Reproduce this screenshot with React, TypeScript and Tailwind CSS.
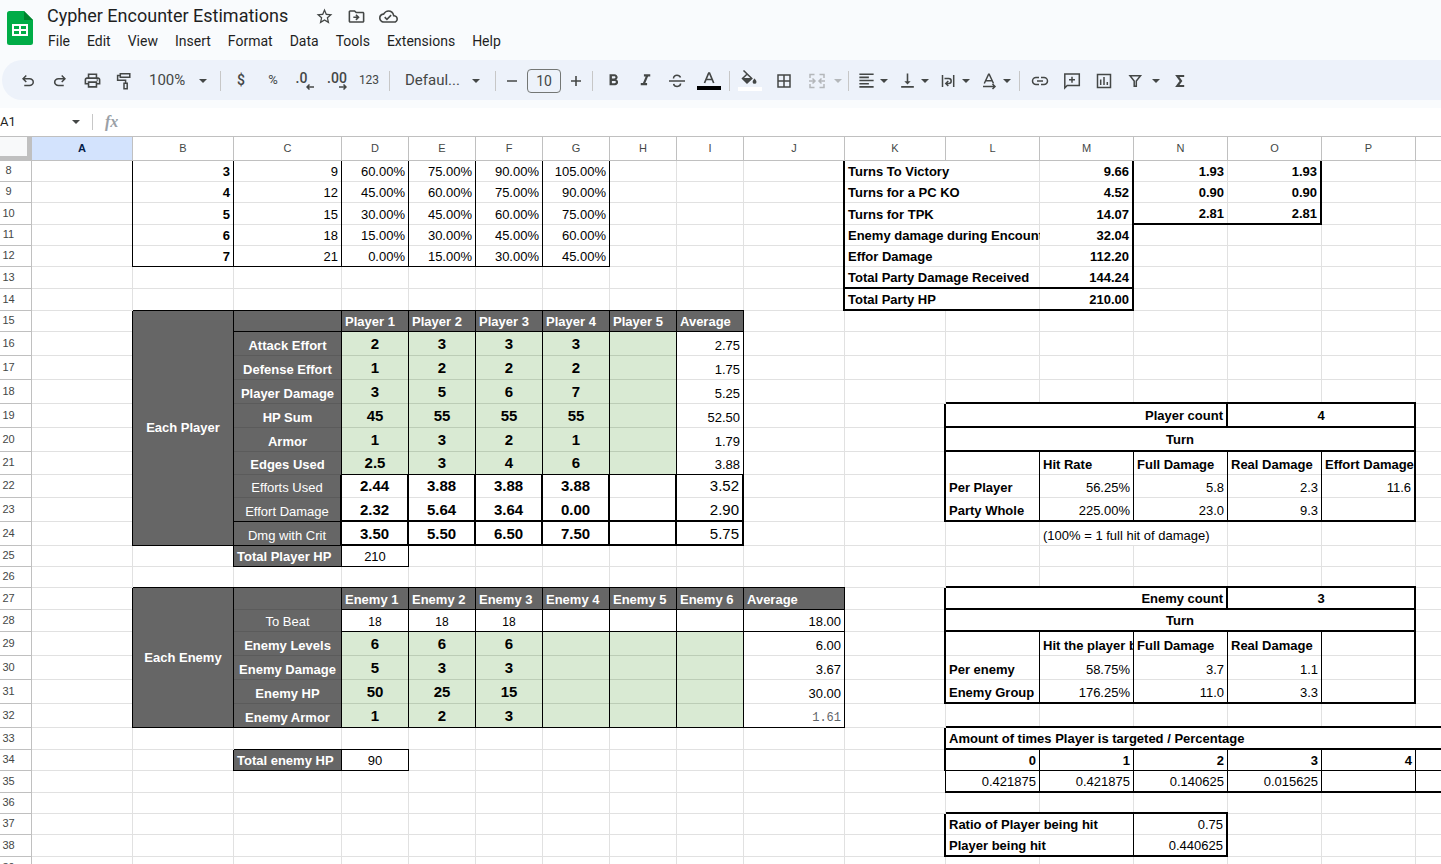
import { useState } from "react";
import type { CSSProperties, ReactNode } from "react";
import clsx from "clsx";
import {
  MdBorderAll,
  MdFormatAlignLeft,
  MdFormatBold,
  MdFormatItalic,
  MdOutlineCloudDone,
  MdOutlineDriveFileMove,
  MdOutlinePrint,
  MdStarBorder,
  MdVerticalAlignBottom,
} from "react-icons/md";

type Cell = {
  v?: string;
  bold?: boolean;
  size?: "sm" | "lg";
  align?: "left" | "center" | "right";
  middle?: boolean;
  fill?: "dark" | "green";
  mono?: boolean;
  cols?: number;
  rows?: number;
};

const COLS = "ABCDEFGHIJKLMNOPQ".split("");
const COL_WIDTHS = [101, 101, 108, 67, 67, 67, 67, 67, 67, 101, 101, 94, 94, 94, 94, 94, 94];

const FIRST_ROW = 8;
const ROW_HEIGHTS = [
  21, 21, 22, 21, 21, 22, 22, 21, 24, 24, 24, 24, 24, 23, 23, 24, 24, 21, 21, 22, 22, 24, 24, 24, 24, 22, 21, 22, 21,
  21, 22, 22,
];

// columns, first row, last row, weight of the line on the right side
const VERTICAL: [string, number, number, number][] = [
  ["AB", 8, 12, 1],
  ["AB", 15, 24, 1],
  ["AB", 27, 32, 1],
  ["BC", 25, 25, 1],
  ["BCD", 34, 34, 1],
  ["CDEFG", 8, 12, 1],
  ["CDEFGHI", 15, 21, 1],
  ["CDEFGHI", 22, 24, 2],
  ["D", 25, 25, 1],
  ["CDEFGHIJ", 27, 32, 1],
  ["JM", 8, 14, 2],
  ["O", 8, 10, 2],
  ["KP", 19, 23, 2],
  ["KP", 27, 31, 2],
  ["LMNO", 21, 23, 1],
  ["LMNO", 29, 31, 1],
  ["N", 19, 19, 2],
  ["N", 27, 27, 2],
  ["K", 33, 34, 2],
  ["K", 35, 35, 1],
  ["LMNOP", 34, 35, 1],
  ["KN", 37, 38, 2],
  ["M", 37, 38, 1],
];

// row, columns, weight of the line under it
const HORIZONTAL: [number, string, number][] = [
  [10, "NO", 2],
  [12, "BCDEFG", 1],
  [13, "KLM", 2],
  [14, "BCDEFGHI", 1],
  [14, "KLM", 2],
  [15, "CDEFGHI", 1],
  [18, "LMNOP", 2],
  [19, "LMNOP", 2],
  [20, "LMNOP", 2],
  [21, "DEFGHI", 1],
  [23, "C", 1],
  [23, "DEFGHI", 2],
  [23, "LMNOP", 2],
  [24, "BC", 1],
  [24, "DEFGHI", 2],
  [25, "CD", 1],
  [26, "BCDEFGHIJ", 1],
  [26, "LMNOP", 2],
  [27, "DEFGHIJ", 1],
  [27, "LMNOP", 2],
  [28, "DEFGHIJ", 1],
  [28, "LMNOP", 2],
  [31, "LMNOP", 2],
  [32, "BCDEFGHIJ", 1],
  [32, "LMNOPQ", 2],
  [33, "CD", 1],
  [33, "LMNOPQ", 2],
  [34, "CD", 1],
  [34, "LMNOPQ", 1],
  [35, "LMNOPQ", 2],
  [36, "LMN", 2],
  [38, "LMN", 2],
];

const cells: Record<string, Cell> = {};

function fillRow(row: number, start: string, values: string[], opts: Cell = {}) {
  const at = COLS.indexOf(start);
  values.forEach((v, i) => {
    cells[COLS[at + i] + row] = { v, ...opts };
  });
}

// hit chances by level
const chances = [
  ["3", "9", "60.00%", "75.00%", "90.00%", "105.00%"],
  ["4", "12", "45.00%", "60.00%", "75.00%", "90.00%"],
  ["5", "15", "30.00%", "45.00%", "60.00%", "75.00%"],
  ["6", "18", "15.00%", "30.00%", "45.00%", "60.00%"],
  ["7", "21", "0.00%", "15.00%", "30.00%", "45.00%"],
];
chances.forEach(([level, ...rest], i) => {
  fillRow(8 + i, "B", [level], { align: "right", bold: true });
  fillRow(8 + i, "C", rest, { align: "right" });
});

// encounter summary
const summary = [
  ["Turns To Victory", "9.66", "1.93", "1.93"],
  ["Turns for a PC KO", "4.52", "0.90", "0.90"],
  ["Turns for TPK", "14.07", "2.81", "2.81"],
  ["Enemy damage during Encounter", "32.04"],
  ["Effor Damage", "112.20"],
  ["Total Party Damage Received", "144.24"],
  ["Total Party HP", "210.00"],
];
summary.forEach(([label, ...rest], i) => {
  cells["K" + (8 + i)] = { v: label, bold: true, cols: 2 };
  fillRow(8 + i, "M", rest, { align: "right", bold: true });
});

// players
cells.B15 = { v: "Each Player", bold: true, fill: "dark", align: "center", middle: true, rows: 10 };
cells.C15 = { fill: "dark" };
fillRow(15, "D", ["Player 1", "Player 2", "Player 3", "Player 4", "Player 5", "Average"], { bold: true, fill: "dark" });
const players = [
  ["Attack Effort", "2", "3", "3", "3", "", "2.75"],
  ["Defense Effort", "1", "2", "2", "2", "", "1.75"],
  ["Player Damage", "3", "5", "6", "7", "", "5.25"],
  ["HP Sum", "45", "55", "55", "55", "", "52.50"],
  ["Armor", "1", "3", "2", "1", "", "1.79"],
  ["Edges Used", "2.5", "3", "4", "6", "", "3.88"],
  ["Efforts Used", "2.44", "3.88", "3.88", "3.88", "", "3.52"],
  ["Effort Damage", "2.32", "5.64", "3.64", "0.00", "", "2.90"],
  ["Dmg with Crit", "3.50", "5.50", "6.50", "7.50", "", "5.75"],
];
players.forEach((p, i) => {
  const row = 16 + i;
  const input = i < 6;
  cells["C" + row] = { v: p[0], bold: input, fill: "dark", align: "center" };
  fillRow(row, "D", p.slice(1, 6), {
    bold: true,
    size: "lg",
    align: "center",
    middle: true,
    fill: input ? "green" : undefined,
  });
  cells["I" + row] = { v: p[6], align: "right", size: input ? undefined : "lg", middle: !input };
});
cells.C25 = { v: "Total Player HP", bold: true, fill: "dark" };
cells.D25 = { v: "210", align: "center" };

// enemies
cells.B27 = { v: "Each Enemy", bold: true, fill: "dark", align: "center", middle: true, rows: 6 };
cells.C27 = { fill: "dark" };
fillRow(27, "D", ["Enemy 1", "Enemy 2", "Enemy 3", "Enemy 4", "Enemy 5", "Enemy 6", "Average"], {
  bold: true,
  fill: "dark",
});
cells.C28 = { v: "To Beat", fill: "dark", align: "center" };
fillRow(28, "D", ["18", "18", "18"], { size: "sm", align: "center" });
cells.J28 = { v: "18.00", align: "right" };
const enemies = [
  ["Enemy Levels", "6", "6", "6", "", "", "", "6.00"],
  ["Enemy Damage", "5", "3", "3", "", "", "", "3.67"],
  ["Enemy HP", "50", "25", "15", "", "", "", "30.00"],
  ["Enemy Armor", "1", "2", "3", "", "", "", "1.61"],
];
enemies.forEach((e, i) => {
  const row = 29 + i;
  cells["C" + row] = { v: e[0], bold: true, fill: "dark", align: "center" };
  fillRow(row, "D", e.slice(1, 7), { bold: true, size: "lg", align: "center", middle: true, fill: "green" });
  cells["J" + row] = { v: e[7], align: "right", mono: i === 3 };
});
cells.C34 = { v: "Total enemy HP", bold: true, fill: "dark" };
cells.D34 = { v: "90", align: "center" };

// per turn results
cells.L19 = { v: "Player count", bold: true, align: "right", middle: true, cols: 3 };
cells.O19 = { v: "4", bold: true, align: "center", middle: true, cols: 2 };
cells.L20 = { v: "Turn", bold: true, align: "center", middle: true, cols: 5 };
fillRow(21, "M", ["Hit Rate", "Full Damage", "Real Damage", "Effort Damage"], { bold: true });
cells.L22 = { v: "Per Player", bold: true };
fillRow(22, "M", ["56.25%", "5.8", "2.3", "11.6"], { align: "right" });
cells.L23 = { v: "Party Whole", bold: true };
fillRow(23, "M", ["225.00%", "23.0", "9.3"], { align: "right" });
cells.M24 = { v: "(100% = 1 full hit of damage)", cols: 2 };

cells.L27 = { v: "Enemy count", bold: true, align: "right", middle: true, cols: 3 };
cells.O27 = { v: "3", bold: true, align: "center", middle: true, cols: 2 };
cells.L28 = { v: "Turn", bold: true, align: "center", middle: true, cols: 5 };
fillRow(29, "M", ["Hit the player by", "Full Damage", "Real Damage"], { bold: true });
cells.L30 = { v: "Per enemy", bold: true };
fillRow(30, "M", ["58.75%", "3.7", "1.1"], { align: "right" });
cells.L31 = { v: "Enemy Group", bold: true };
fillRow(31, "M", ["176.25%", "11.0", "3.3"], { align: "right" });

cells.L33 = { v: "Amount of times Player is targeted / Percentage", bold: true, middle: true, cols: 6 };
fillRow(34, "L", ["0", "1", "2", "3", "4"], { bold: true, align: "right" });
fillRow(35, "L", ["0.421875", "0.421875", "0.140625", "0.015625"], { align: "right" });
cells.L37 = { v: "Ratio of Player being hit", bold: true, cols: 2 };
cells.N37 = { v: "0.75", align: "right" };
cells.L38 = { v: "Player being hit", bold: true, cols: 2 };
cells.N38 = { v: "0.440625", align: "right" };

// cells hidden under a merged neighbour
const covered = new Set<string>();
Object.entries(cells).forEach(([id, c]) => {
  const col = COLS.indexOf(id[0]);
  const row = Number(id.slice(1));
  for (let r = 0; r < (c.rows ?? 1); r++) {
    for (let k = 0; k < (c.cols ?? 1); k++) {
      if (r || k) covered.add(COLS[col + k] + (row + r));
    }
  }
});

function rightWeight(col: string, row: number) {
  return VERTICAL.find(([c, from, to]) => c.includes(col) && row >= from && row <= to)?.[3] ?? 0;
}

function bottomWeight(col: string, row: number) {
  return HORIZONTAL.find(([r, c]) => r === row && c.includes(col))?.[2] ?? 0;
}

function cellLines(right: number, bottom: number, fill?: Cell["fill"]): CSSProperties {
  const soft = fill === "dark" ? "#5b5b5b" : fill === "green" ? "#bccdb6" : "#e1e1e1";
  const r = `inset -${right || 1}px 0 ${right ? "#000" : soft}`;
  const b = `inset 0 -${bottom || 1}px ${bottom ? "#000" : soft}`;
  return { boxShadow: right ? `${r}, ${b}` : `${b}, ${r}` };
}

function SheetCell({ id, cell }: { id: string; cell: Cell }) {
  const lastCol = COLS[COLS.indexOf(id[0]) + (cell.cols ?? 1) - 1];
  const lastRow = Number(id.slice(1)) + (cell.rows ?? 1) - 1;
  const right = rightWeight(lastCol, lastRow);
  const bottom = bottomWeight(lastCol, lastRow);
  return (
    <td
      colSpan={cell.cols}
      rowSpan={cell.rows}
      style={cellLines(right, bottom, cell.fill)}
      className={clsx(
        "overflow-hidden whitespace-nowrap pt-0 pl-[3px] leading-4",
        right === 2 ? "pr-[5px]" : "pr-1",
        cell.middle ? "pb-px align-middle" : "align-bottom",
        !cell.middle && (bottom === 2 ? "pb-[3px]" : "pb-0.5"),
        cell.bold && "font-bold",
        cell.mono && "font-['Liberation_Mono',monospace] text-xs text-[#5f6368]",
        !cell.mono && (cell.size === "lg" ? "text-[15px]" : cell.size === "sm" ? "text-xs" : "text-[13px]"),
        cell.align === "right" && "text-right",
        cell.align === "center" && "text-center",
        cell.fill === "dark" && "bg-[#666666] text-white",
        cell.fill === "green" && "bg-[#d9ead3]",
      )}
    >
      {cell.v}
    </td>
  );
}

function Sheet() {
  return (
    <div className="flex-1 overflow-hidden border-t border-[#c0c0c0] bg-white">
      <table className="w-[1510px] table-fixed border-separate border-spacing-0 font-['Liberation_Sans',sans-serif] text-black">
        <colgroup>
          <col className="w-8" />
          {COL_WIDTHS.map((w, i) => (
            <col key={i} style={{ width: w }} />
          ))}
        </colgroup>
        <thead>
          <tr className="h-6">
            <th aria-label="Select all" className="border-r-[5px] border-b-[5px] border-[#c0c0c0] bg-[#f8f9fa]" />
            {COLS.map((c) => (
              <th
                key={c}
                scope="col"
                className={clsx(
                  "border-r border-b border-[#c0c0c0] px-0 pt-0 pb-0.5 text-center text-[11px] leading-4",
                  c === "A" ? "bg-[#d3e3fd] font-bold text-[#041e49]" : "font-normal text-[#444746]",
                )}
              >
                {c}
              </th>
            ))}
          </tr>
        </thead>
        <tbody>
          {ROW_HEIGHTS.map((height, i) => {
            const row = FIRST_ROW + i;
            return (
              <tr key={row} style={{ height }}>
                <th
                  scope="row"
                  className="border-r border-b border-[#c0c0c0] pt-0 pr-[14px] pb-0.5 pl-0 text-center align-middle text-[11px] leading-4 font-normal text-[#444746]"
                >
                  {row}
                </th>
                {COLS.filter((c) => !covered.has(c + row)).map((c) => (
                  <SheetCell key={c} id={c + row} cell={cells[c + row] ?? {}} />
                ))}
              </tr>
            );
          })}
        </tbody>
      </table>
    </div>
  );
}

function SheetsLogo() {
  return (
    <svg width="26" height="34" viewBox="0 0 26 34" aria-hidden="true">
      <path d="M2.500 0H17l9 9v22.500a2.500 2.500 0 0 1-2.500 2.500h-21A2.500 2.500 0 0 1 0 31.500v-29A2.500 2.500 0 0 1 2.500 0Z" fill="#00ac47" />
      <path d="M17 0l9 9h-9Z" fill="#00832d" />
      <path d="M5 13h16v12H5Zm2 2v3h5v-3Zm7 0v3h5v-3Zm-7 5v3h5v-3Zm7 0v3h5v-3Z" fill="#fff" fillRule="evenodd" />
    </svg>
  );
}

function Icon({ children, box = "0 0 18 18" }: { children: ReactNode; box?: string }) {
  return (
    <svg width="18" height="18" viewBox={box} fill="none" stroke="currentColor" strokeWidth="1.500" aria-hidden="true">
      {children}
    </svg>
  );
}

function Caret() {
  return (
    <span className="flex w-3 justify-center">
      <svg width="8" height="4" viewBox="0 0 8 4" fill="currentColor" aria-hidden="true">
        <path d="M0 0h8L4 4Z" />
      </svg>
    </span>
  );
}

function Tool({ label, className = "w-8", children }: { label: string; className?: string; children: ReactNode }) {
  return (
    <button type="button" aria-label={label} className={clsx("flex h-7 shrink-0 items-center justify-center rounded", className)}>
      {children}
    </button>
  );
}

function MenuTool({ label, className = "w-[41px]", children }: { label: string; className?: string; children: ReactNode }) {
  return (
    <button type="button" aria-label={label} className={clsx("flex h-7 shrink-0 items-center justify-end rounded", className)}>
      <span className="flex w-6 justify-center">{children}</span>
      <Caret />
    </button>
  );
}

function Divider() {
  return <span className="mx-1 h-5 w-px shrink-0 bg-[#c7c7c7]" />;
}

function Decimals({ text, increase }: { text: string; increase?: boolean }) {
  return (
    <span className="flex flex-col items-end">
      <span className={clsx("text-sm leading-3 font-medium", !increase && "pr-[7px]")}>{text}</span>
      <svg width="8" height="6" viewBox="0 0 8 6" fill="none" stroke="currentColor" strokeWidth="1.500" aria-hidden="true">
        {increase ? <path d="M0 3h7M4.500 .5 7 3 4.500 5.500" /> : <path d="M8 3H1M3.500 .5 1 3 3.500 5.500" />}
      </svg>
    </span>
  );
}

function Toolbar() {
  const [fontSize, setFontSize] = useState("10");
  const step = (by: number) => setFontSize(String(Number(fontSize) + by));
  return (
    <div className="ml-0.5 flex h-10 items-center overflow-hidden rounded-l-full bg-[#edf2fa] pt-px pl-[10px] text-[#444746]">
      <Tool label="Undo">
        <Icon box="0 -960 960 960">
          <path stroke="none" fill="currentColor" d="M280-200v-80h284q63 0 109.500-40T720-420q0-60-46.500-100T564-560H312l104 104-56 56-200-200 200-200 56 56-104 104h252q97 0 169.500 63T800-420q0 94-72.500 157T564-200H280Z" />
        </Icon>
      </Tool>
      <Tool label="Redo">
        <Icon box="0 -960 960 960">
          <path stroke="none" fill="currentColor" d="M396-200q-97 0-169.500-63T154-420q0-94 72.500-157T396-640h252L544-744l56-56 200 200-200 200-56-56 104-104H396q-63 0-109.500 40T240-420q0 60 46.500 100T396-280h284v80H396Z" />
        </Icon>
      </Tool>
      <Tool label="Print">
        <MdOutlinePrint size={19} />
      </Tool>
      <Tool label="Paint format">
        <Icon>
          <path d="M5.300 1.700h9.500v3.600H5.300ZM5.300 3.500H2.600v4.700h8v3" />
          <path d="M9 11.200h3.200v5.600H9Z" />
        </Icon>
      </Tool>
      <button type="button" className="flex h-7 w-[76px] shrink-0 items-center justify-between pr-[7px] pl-[9px] text-[15px]">
        100%
        <Caret />
      </button>
      <Divider />
      <Tool label="Format as currency">
        <span className="pb-0.5 text-sm font-medium">$</span>
      </Tool>
      <Tool label="Format as percent">
        <span className="pb-0.5 text-[13px]">%</span>
      </Tool>
      <Tool label="Decrease decimal places">
        <Decimals text=".0" />
      </Tool>
      <Tool label="Increase decimal places">
        <Decimals text=".00" increase />
      </Tool>
      <Tool label="More formats">
        <span className="pb-0.5 text-xs">123</span>
      </Tool>
      <Divider />
      <button type="button" className="flex h-7 w-[97px] shrink-0 items-center justify-between pr-[9px] pl-[11px] text-[15px]">
        Defaul...
        <Caret />
      </button>
      <Divider />
      <button type="button" aria-label="Decrease font size" onClick={() => step(-1)} className="flex h-6 w-6 shrink-0 items-center justify-center">
        <svg width="12" height="12" viewBox="0 0 12 12" stroke="currentColor" strokeWidth="1.600">
          <path d="M1 6h10" />
        </svg>
      </button>
      <input
        aria-label="Font size"
        value={fontSize}
        onChange={(e) => setFontSize(e.target.value)}
        className="mx-[3px] h-6 w-[34px] shrink-0 rounded border border-[#747775] bg-transparent text-center text-sm"
      />
      <button type="button" aria-label="Increase font size" onClick={() => step(1)} className="flex h-6 w-6 shrink-0 items-center justify-center">
        <svg width="12" height="12" viewBox="0 0 12 12" stroke="currentColor" strokeWidth="1.600">
          <path d="M1 6h10M6 1v10" />
        </svg>
      </button>
      <Divider />
      <Tool label="Bold">
        <MdFormatBold size={19} />
      </Tool>
      <Tool label="Italic">
        <MdFormatItalic size={19} />
      </Tool>
      <Tool label="Strikethrough">
        <Icon>
          <path d="M1 9h16M5.500 6.500C5.500 4.300 7 3.300 9 3.300c1.800 0 3 .9 3.500 2.300M5.600 11.800c.3 1.600 1.600 2.600 3.600 2.600s3.400-1 3.400-2.800" />
        </Icon>
      </Tool>
      <Tool label="Text color">
        <svg width="24" height="20" viewBox="0 0 24 20" aria-hidden="true">
          <path d="M7.500 12 11.700 2h.8l4.200 10M9 8.500h6.200" fill="none" stroke="currentColor" strokeWidth="1.700" />
          <path d="M0 15h24v4H0Z" fill="#000" />
        </svg>
      </Tool>
      <Divider />
      <Tool label="Fill color">
        <svg width="24" height="22" viewBox="0 0 24 22" aria-hidden="true">
          <path d="M5.500.5 13.800 8.500 9 13 4.500 8.500l4.700-4.500" fill="none" stroke="currentColor" strokeWidth="1.500" />
          <path d="M4.500 8h9.300L9 13ZM16.500 8.500s2 2.200 2 3.400a1.900 1.900 0 0 1-3.900 0c0-1.200 1.900-3.400 1.900-3.400Z" fill="currentColor" />
          <path d="M0 17h24v4H0Z" fill="#fff" />
        </svg>
      </Tool>
      <Tool label="Borders" className="w-9">
        <MdBorderAll size={18} />
      </Tool>
      <button type="button" aria-label="Merge cells" disabled className="flex h-7 w-[42px] shrink-0 items-center justify-end text-[#b4b7ba]">
        <span className="flex w-[30px] justify-center">
          <Icon>
            <path d="M6.500 2.500H2V6M2 12v3.500h4.500M11.500 2.500H16V6M16 12v3.500h-4.500M1 9h5M17 9h-5M4.500 6.500 7 9l-2.500 2.500M13.500 6.500 11 9l2.500 2.500" />
          </Icon>
        </span>
        <Caret />
      </button>
      <Divider />
      <MenuTool label="Horizontal align" className="w-[37px]">
        <MdFormatAlignLeft size={19} />
      </MenuTool>
      <MenuTool label="Vertical align">
        <MdVerticalAlignBottom size={19} />
      </MenuTool>
      <MenuTool label="Text wrapping">
        <Icon>
          <path d="M3.500 3v12M14.700 3v12M5.500 6.500h4.200a2.500 2.500 0 0 1 0 5H7M9.300 9 6.800 11.500 9.300 14" />
        </Icon>
      </MenuTool>
      <MenuTool label="Text rotation" className="mr-0.5 w-[41px]">
        <Icon>
          <path d="M4.300 11.500 8.600 2.300h.6l4.300 9.200M5.600 8.800h6.600" />
          <path d="M3 14.500h12M12.500 12l2.500 2.500-2.500 2.500" />
        </Icon>
      </MenuTool>
      <Divider />
      <Tool label="Insert link">
        <Icon>
          <path d="M8 5.500H5a3.500 3.500 0 0 0 0 7h3M10 5.500h3a3.500 3.500 0 0 1 0 7h-3M6 9h6" />
        </Icon>
      </Tool>
      <Tool label="Insert comment">
        <Icon>
          <path d="M1.800 16V2h14.500v11.500H4.200ZM9 4.800v6M6 7.800h6" />
        </Icon>
      </Tool>
      <Tool label="Insert chart">
        <Icon>
          <path d="M2.500 2.500h13v13h-13ZM5.700 7.500V13M9 5v8M12.300 10v3" />
        </Icon>
      </Tool>
      <button type="button" aria-label="Create a filter" className="flex h-7 w-[42px] shrink-0 items-center">
        <span className="flex w-[30px] justify-center">
          <Icon>
            <path d="M4 3.800h10.500L10.300 9v5.300H8.200V9Z" />
          </Icon>
        </span>
        <Caret />
      </button>
      <Tool label="Functions" className="w-9">
        <Icon>
          <path d="M13.200 4H6.300L10 9l-3.700 5h6.900" strokeWidth="2.200" />
        </Icon>
      </Tool>
    </div>
  );
}

const menus = ["File", "Edit", "View", "Insert", "Format", "Data", "Tools", "Extensions", "Help"];

export default function App() {
  const [title, setTitle] = useState("Cypher Encounter Estimations");
  return (
    <div className="flex h-screen flex-col overflow-hidden bg-white font-[Roboto,sans-serif]">
      <header className="bg-[#f9fbfd] pb-2">
        <div className="flex h-15 pl-[7px]">
          <div className="w-10 pt-[11px]">
            <SheetsLogo />
          </div>
          <div>
            <div className="flex h-[31px] items-center">
              <input
                aria-label="Document title"
                value={title}
                onChange={(e) => setTitle(e.target.value)}
                className="w-[267px] bg-transparent text-lg text-[#1f1f1f]"
              />
              <div className="flex gap-3 pt-0.5 text-[#444746]">
                <button type="button" aria-label="Star" className="flex w-5 justify-center">
                  <MdStarBorder size={19} />
                </button>
                <button type="button" aria-label="Move" className="flex w-5 justify-center">
                  <MdOutlineDriveFileMove size={19} />
                </button>
                <button type="button" aria-label="Document status" className="flex w-5 justify-center">
                  <MdOutlineCloudDone size={19} />
                </button>
              </div>
            </div>
            <nav className="flex gap-[17px] pl-px text-sm text-[#1f1f1f]">
              {menus.map((m) => (
                <button key={m} type="button">
                  {m}
                </button>
              ))}
            </nav>
          </div>
        </div>
        <Toolbar />
      </header>
      <div className="flex h-7 shrink-0 items-center">
        <input aria-label="Name box" defaultValue="A1" className="w-[70px] text-[13px] text-[#1f1f1f]" />
        <span className="text-[#444746]">
          <Caret />
        </span>
        <span className="ml-[10px] h-4 w-px bg-[#c7c7c7]" />
        <label htmlFor="formula" className="ml-3 font-['Liberation_Serif',serif] text-base font-bold text-[#9aa0a6] italic">
          fx
        </label>
        <input id="formula" className="ml-2 flex-1 text-[13px]" />
      </div>
      <Sheet />
    </div>
  );
}
